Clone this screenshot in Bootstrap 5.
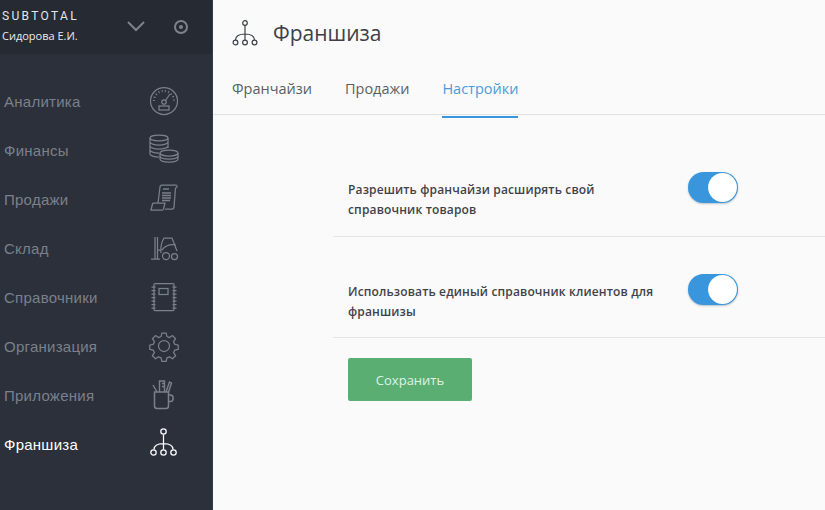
<!DOCTYPE html>
<html lang="ru">
<head>
    <meta charset="UTF-8">
    <meta name="viewport" content="width=device-width, initial-scale=1.0">
    <title>Франшиза</title>
    <link href="https://cdn.jsdelivr.net/npm/bootstrap@5.3.0/dist/css/bootstrap.min.css" rel="stylesheet">
    <style>
        html, body { height: 100%; }
        body { background: #fafafa; overflow: hidden; font-family: "Open Sans", sans-serif; }
        .app-shell { height: 510px; }
        .side-panel { width: 213px; flex: none; background: #2b303b; border-right: 1px solid #343a46; }
        .side-head { height: 54px; background: #262a33; padding: 0 0 0 2px; }
        .brand-name { font: 12px/16px "Roboto", sans-serif; letter-spacing: 2.35px; color: #e4e6ea; padding-top: 8px; }
        .brand-user { font: 500 11px/16px "Open Sans", sans-serif; color: #e8eaee; margin-top: 4px; }
        .head-chevron { left: 126px; top: 19px; }
        .head-dot { left: 173px; top: 19px; }
        .side-menu { padding-top: 23px; }
        .side-item { height: 49px; padding: 0 0 0 4px; font: 15px "Liberation Sans", sans-serif; letter-spacing: .25px; color: #7b808a; }
        .side-item:hover { color: #7b808a; }
        .side-item.is-active { color: #fff; }
        .side-item .side-icon { position: absolute; left: 148px; top: 8px; }
        .side-icon { stroke: currentColor; fill: none; stroke-width: 1.25; }
        .main-pane { min-width: 0; }
        .page-head { height: 66px; padding-left: 19px; gap: 15px; }
        .page-title { font: 21px/1 "Open Sans", sans-serif; color: #3d4147; margin: 0; }
        .tab-strip { height: 49px; padding-left: 19px; gap: 33px; border-bottom: 1px solid #e1e2e3; }
        .tab-link { font: 14.5px/1 "Open Sans", sans-serif; color: #5a5e63; padding: 0; height: 52px; padding-top: 16px; }
        .tab-link:hover { color: #5a5e63; }
        .tab-link.is-active { color: #4a9ada; border-bottom: 2px solid #3a96dc; }
        .settings-box { margin: 20px 0 0 120px; }
        .setting-row { height: 101.5px; padding: 37px 87px 0 15px; border-bottom: 1px solid #e3e4e5; }
        .setting-text { width: 315px; padding-top: 8px; font: 600 12px/20px "Open Sans", sans-serif; letter-spacing: .15px; color: #3f4349; margin: 0; }
        .form-switch.setting-switch { padding: 0; margin: 0; min-height: 0; }
        .form-switch.setting-switch .form-check-input {
            width: 50px; height: 31px; margin: 0; border: 0; background-color: #3a96dc; float: none; display: block;
            background-position: right center;
            background-image: url("data:image/svg+xml,%3csvg xmlns='http://www.w3.org/2000/svg' viewBox='-4 -4 8 8'%3e%3ccircle r='3.72' fill='%23fff'/%3e%3c/svg%3e");
            box-shadow: 0 1px 2px rgba(40,60,80,.3);
        }
        .save-btn { width: 124px; height: 43px; margin: 20px 0 0 15px; background: #5bae72; border: 0; border-radius: 2px; color: #dff3e4; font: 13px "Open Sans", sans-serif; }
        .save-btn:hover { background: #5bae72; color: #dff3e4; }
    </style>
</head>
<body>
<div class="app-shell d-flex">
    <aside class="side-panel d-flex flex-column">
        <div class="side-head position-relative">
            <div class="brand-name">SUBTOTAL</div>
            <div class="brand-user">Сидорова Е.И.</div>
            <svg class="head-chevron position-absolute" width="20" height="16" viewBox="0 0 20 16" fill="none" stroke="#7d828c" stroke-width="2"><path d="M2 3l8 8 8-8"/></svg>
            <svg class="head-dot position-absolute" width="16" height="16" viewBox="0 0 16 16" fill="none" stroke="#7d828c"><circle cx="8" cy="8" r="6" stroke-width="2"/><circle cx="8" cy="8" r="2" fill="#7d828c" stroke="none"/></svg>
        </div>
        <nav class="side-menu nav flex-column">
            <a class="side-item nav-link position-relative d-flex align-items-center" href="#">Аналитика
                <svg class="side-icon" width="32" height="32" viewBox="0 0 32 32"><circle cx="16" cy="16" r="13.500"/><path d="M6 16a10 10 0 0 1 20 0" stroke-width="2.200" stroke-dasharray="1 2.300"/><circle cx="16" cy="17" r="2.200"/><path d="M17.500 15.500L22 9"/><rect x="11" y="21" width="10" height="4"/></svg>
            </a>
            <a class="side-item nav-link position-relative d-flex align-items-center" href="#">Финансы
                <svg class="side-icon" width="32" height="32" viewBox="0 0 32 32"><ellipse cx="11" cy="4" rx="9" ry="2.800"/><path d="M2 4v16c0 1.600 4 3 9 3M20 4v10M2 8c0 1.600 4 3 9 3s9-1.400 9-3M2 12c0 1.600 4 3 9 3s9-1.400 9-3M2 16c0 1.600 4 3 9 3"/><ellipse cx="21" cy="19" rx="9" ry="3"/><path d="M12 19v6c0 1.800 4 3 9 3s9-1.200 9-3v-6M12 22c0 1.800 4 3 9 3s9-1.200 9-3"/></svg>
            </a>
            <a class="side-item nav-link position-relative d-flex align-items-center" href="#">Продажи
                <svg class="side-icon" width="32" height="32" viewBox="0 0 32 32"><path d="M10 20l2-16c0-1 1-2 2-2h14c1.500 0 1.500 3-.5 3L26 24c0 1.500-1 2-2 2h-7"/><path d="M3 27l1.500-6c.2-.6 .5-1 1-1H17l-1.500 6c-.2.6-.5 1-1 1z"/><path d="M15 6h6M14 10h9M14 12.500h9M14 15h9M14 17.500h8" stroke-width="1.400"/></svg>
            </a>
            <a class="side-item nav-link position-relative d-flex align-items-center" href="#">Склад
                <svg class="side-icon" width="32" height="32" viewBox="0 0 32 32"><path d="M3 27h9M7 27V5M9.500 27V5M9.500 18l3 0M13 21c-.5-6 .5-11 3-15h8l5 13"/><circle cx="18" cy="24" r="3.500"/><circle cx="26.500" cy="24.500" r="3"/><path d="M14 18c3-4 8-6 14-5"/></svg>
            </a>
            <a class="side-item nav-link position-relative d-flex align-items-center" href="#">Справочники
                <svg class="side-icon" width="32" height="32" viewBox="0 0 32 32"><rect x="6" y="2.500" width="20" height="27" rx="1"/><rect x="11" y="7.500" width="9" height="6"/><path d="M3.500 6h4M3.500 9.500h4M3.500 13h4M3.500 16.500h4M3.500 20h4M3.500 23.500h4M3.500 27h4M24.500 6h4M24.500 9.500h4M24.500 13h4M24.500 16.500h4M24.500 20h4M24.500 23.500h4M24.500 27h4"/></svg>
            </a>
            <a class="side-item nav-link position-relative d-flex align-items-center" href="#">Организация
                <svg class="side-icon" width="32" height="32" viewBox="0 0 32 32"><circle cx="16" cy="16" r="5.500"/><path d="M13.800 3h4.400l.7 3.500 2.600 1.100 3-2 3.100 3.100-2 3 1.100 2.600 3.500.7v4.400l-3.500.7-1.100 2.600 2 3-3.100 3.100-3-2-2.600 1.100-.7 3.500h-4.400l-.7-3.500-2.600-1.100-3 2-3.100-3.100 2-3-1.100-2.600-3.500-.7v-4.400l3.500-.7 1.100-2.600-2-3 3.100-3.100 3 2 2.600-1.100z" stroke-linejoin="round"/></svg>
            </a>
            <a class="side-item nav-link position-relative d-flex align-items-center" href="#">Приложения
                <svg class="side-icon" width="32" height="32" viewBox="0 0 32 32"><path d="M6.500 13h14v14c0 1.500-1 2.500-2.500 2.500H9c-1.500 0-2.500-1-2.500-2.500zM20.500 16h2c3.500 0 3.500 6.500 0 6.500h-2" stroke-width="1.500"/><path d="M5 6l4 7M11.500 13V2h5v11M14 4.500h2.500M14 7.500h2.500M18 13l3.500-10 2 1-3 9" stroke-width="1.400"/></svg>
            </a>
            <a class="side-item is-active nav-link position-relative d-flex align-items-center" href="#">Франшиза
                <svg class="side-icon" width="32" height="32" viewBox="0 0 32 32"><circle cx="15.500" cy="3.500" r="2.700"/><path d="M15.500 6.500v15M15.500 15.500c-6 0-9.500 2-9.500 6M15.500 15.500c6 0 9.500 2 9.500 6"/><circle cx="5.500" cy="24.500" r="2.700"/><circle cx="15.500" cy="24.500" r="2.700"/><circle cx="25.500" cy="24.500" r="2.700"/></svg>
            </a>
        </nav>
    </aside>
    <main class="main-pane flex-grow-1">
        <header class="page-head d-flex align-items-center">
            <svg width="26" height="26" viewBox="0 0 26 26" fill="none" stroke="#3d4147" stroke-width="1.200"><circle cx="13" cy="3" r="2.300"/><path d="M13 5.500V20M13 14c-6 0-9.500 2-9.500 6M13 14c6 0 9.500 2 9.500 6"/><circle cx="3.500" cy="22.500" r="2.400"/><circle cx="13" cy="22.500" r="2.400"/><circle cx="22.500" cy="22.500" r="2.400"/></svg>
            <h1 class="page-title">Франшиза</h1>
        </header>
        <div class="tab-strip nav">
            <a class="tab-link nav-link" href="#">Франчайзи</a>
            <a class="tab-link nav-link" href="#">Продажи</a>
            <a class="tab-link nav-link is-active" href="#">Настройки</a>
        </div>
        <div class="settings-box">
            <div class="setting-row d-flex justify-content-between align-items-start">
                <p class="setting-text">Разрешить франчайзи расширять свой справочник товаров</p>
                <div class="form-check form-switch setting-switch"><input class="form-check-input" type="checkbox" role="switch" checked></div>
            </div>
            <div class="setting-row d-flex justify-content-between align-items-start">
                <p class="setting-text">Использовать единый справочник клиентов для франшизы</p>
                <div class="form-check form-switch setting-switch"><input class="form-check-input" type="checkbox" role="switch" checked></div>
            </div>
            <button class="btn save-btn" type="button">Сохранить</button>
        </div>
    </main>
</div>
<script src="https://cdn.jsdelivr.net/npm/bootstrap@5.3.0/dist/js/bootstrap.bundle.min.js"></script>
</body>
</html>
